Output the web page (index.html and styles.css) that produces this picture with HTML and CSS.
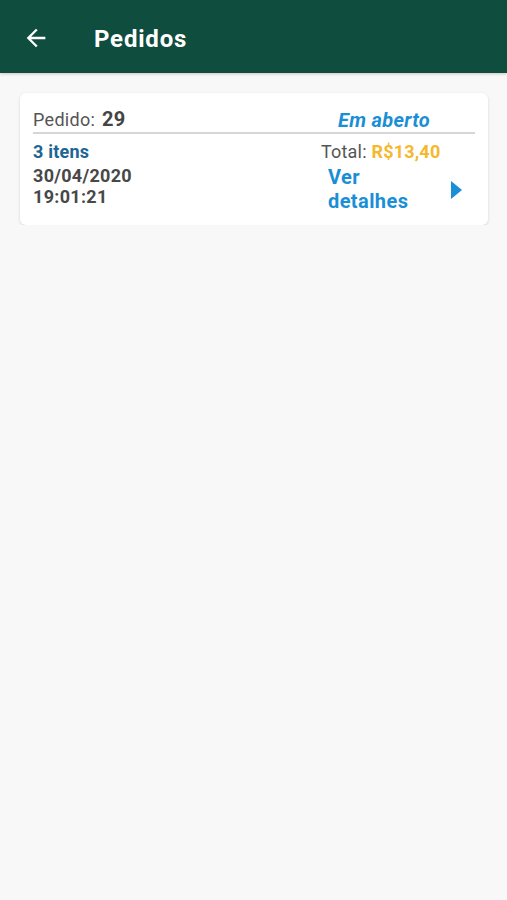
FILE: index.html
```html
<!DOCTYPE html>
<html lang="pt-BR">
<head>
  <meta charset="UTF-8" />
  <meta name="viewport" content="width=device-width, initial-scale=1.0"/>
  <title>Pedidos</title>
  <link rel="stylesheet" href="styles.css">
</head>
<body>
  <header class="appbar">
    <svg class="back" width="28" height="28" viewBox="0 0 24 24">
      <path d="M20 11H7.83l5.59-5.59L12 4l-8 8 8 8 1.41-1.41L7.83 13H20v-2z" fill="#fff"/>
    </svg>
    <h1>Pedidos</h1>
  </header>

  <div class="list">
    <div class="card">
      <div class="card-top">
        <div class="order">Pedido: <b>29</b></div>
        <div class="status">Em aberto</div>
      </div>
      <div class="card-body">
        <div class="left">
          <div class="items">3 itens</div>
          <div class="date">30/04/2020<br>19:01:21</div>
        </div>
        <div class="right">
          <div class="total">Total: <span class="price">R$13,40</span></div>
          <div class="details">
            <span>Ver<br>detalhes</span>
            <svg width="11" height="18" viewBox="0 0 11 18"><path d="M0 0l11 9-11 9z" fill="#1a8fd6"/></svg>
          </div>
        </div>
      </div>
    </div>
  </div>
</body>
</html>
```

FILE: styles.css
```css
body {
  margin: 0;
  font-family: Roboto, "Noto Sans", sans-serif;
  background: #f8f8f8;
}

.appbar {
  background: #0f4d3f;
  height: 73px;
  display: flex;
  align-items: center;
  padding: 0 22px;
  box-sizing: border-box;
  box-shadow: 0 1px 3px rgba(0, 0, 0, 0.2);
}

.back {
  margin-top: 2px;
}

.appbar h1 {
  margin: 0 0 0 44px;
  color: #fff;
  font-size: 24px;
  font-weight: bold;
  letter-spacing: 0.8px;
  padding-top: 4px;
}

.list {
  padding: 20px 19px 0 20px;
}

.card {
  background: #fff;
  border-radius: 6px;
  box-shadow: 0 1px 3px rgba(0, 0, 0, 0.15);
  padding: 14px 13px 12px 13px;
}

.card-top {
  display: flex;
  justify-content: space-between;
  align-items: flex-end;
  border-bottom: 2px solid #d6d6d6;
  line-height: 24px;
}

.order {
  font-size: 18px;
  color: #555;
  letter-spacing: 0.3px;
}

.order b {
  font-size: 20px;
  color: #444;
  margin-left: 2px;
}

.status {
  margin-right: 45px;
  font-style: italic;
  font-weight: bold;
  font-size: 20px;
  letter-spacing: 0.3px;
  color: #1a8fd6;
}

.card-body {
  display: flex;
  justify-content: space-between;
  padding-top: 7px;
}

.items {
  font-size: 18px;
  font-weight: bold;
  color: #1d6593;
  letter-spacing: 0.2px;
}

.date {
  margin-top: 3px;
  font-size: 18px;
  font-weight: bold;
  color: #484848;
  line-height: 21px;
  letter-spacing: 0.3px;
}

.right {
  width: 154px;
}

.total {
  font-size: 18px;
  color: #555;
  letter-spacing: 0.2px;
}

.price {
  font-weight: bold;
  color: #f5b82e;
}

.details {
  display: flex;
  align-items: center;
  justify-content: space-between;
  padding-left: 7px;
  padding-right: 13px;
  margin-top: 3px;
  font-size: 20px;
  font-weight: bold;
  color: #1a8fd6;
  line-height: 24px;
  letter-spacing: 0.4px;
}

.details svg {
  margin-top: 2px;
}
```
